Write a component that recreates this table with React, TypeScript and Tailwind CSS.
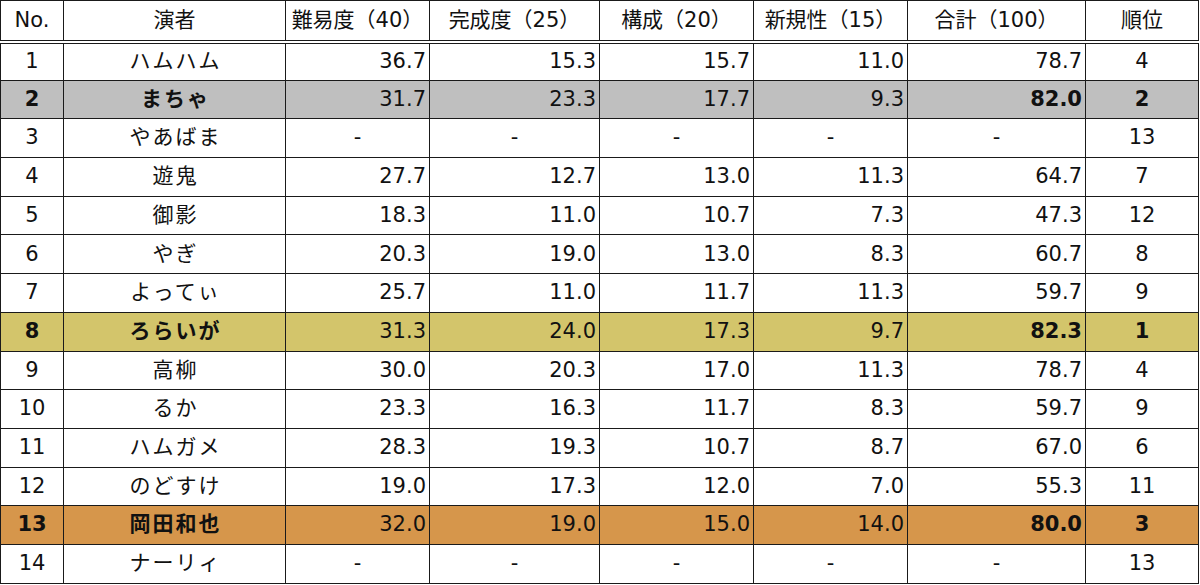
type Row = {
  no: number;
  name: string;
  scores: string[];
  total: string;
  rank: number;
  hl?: 'gray' | 'gold' | 'orange';
};

const rows: Row[] = [
  { no: 1, name: 'ハムハム', scores: ['36.7', '15.3', '15.7', '11.0'], total: '78.7', rank: 4 },
  { no: 2, name: 'まちゃ', scores: ['31.7', '23.3', '17.7', '9.3'], total: '82.0', rank: 2, hl: 'gray' },
  { no: 3, name: 'やあばま', scores: ['-', '-', '-', '-'], total: '-', rank: 13 },
  { no: 4, name: '遊鬼', scores: ['27.7', '12.7', '13.0', '11.3'], total: '64.7', rank: 7 },
  { no: 5, name: '御影', scores: ['18.3', '11.0', '10.7', '7.3'], total: '47.3', rank: 12 },
  { no: 6, name: 'やぎ', scores: ['20.3', '19.0', '13.0', '8.3'], total: '60.7', rank: 8 },
  { no: 7, name: 'よってぃ', scores: ['25.7', '11.0', '11.7', '11.3'], total: '59.7', rank: 9 },
  { no: 8, name: 'ろらいが', scores: ['31.3', '24.0', '17.3', '9.7'], total: '82.3', rank: 1, hl: 'gold' },
  { no: 9, name: '高柳', scores: ['30.0', '20.3', '17.0', '11.3'], total: '78.7', rank: 4 },
  { no: 10, name: 'るか', scores: ['23.3', '16.3', '11.7', '8.3'], total: '59.7', rank: 9 },
  { no: 11, name: 'ハムガメ', scores: ['28.3', '19.3', '10.7', '8.7'], total: '67.0', rank: 6 },
  { no: 12, name: 'のどすけ', scores: ['19.0', '17.3', '12.0', '7.0'], total: '55.3', rank: 11 },
  { no: 13, name: '岡田和也', scores: ['32.0', '19.0', '15.0', '14.0'], total: '80.0', rank: 3, hl: 'orange' },
  { no: 14, name: 'ナーリィ', scores: ['-', '-', '-', '-'], total: '-', rank: 13 },
];

const headers = ['No.', '演者', '難易度（40）', '完成度（25）', '構成（20）', '新規性（15）', '合計（100）', '順位'];
const widths = ['w-[63px]', 'w-[222px]', 'w-[144px]', 'w-[170px]', 'w-[154px]', 'w-[154px]', 'w-[178px]', 'w-[113px]'];

const bgFor = (hl?: Row['hl']) =>
  hl === 'gray' ? 'bg-[#bfbfbf]' : hl === 'gold' ? 'bg-[#d3c56b]' : hl === 'orange' ? 'bg-[#d6964b]' : 'bg-white';

export default function App() {
  const cell = 'border border-[#1a1a1a] h-[38.7px] p-0';
  return (
    <div
      className="w-[1200px] h-[585px] bg-white text-[#111] text-[21px] overflow-hidden"
      style={{ fontFamily: '"DejaVu Sans", "Noto Sans CJK JP", sans-serif' }}
    >
      <table className="border-collapse table-fixed w-[1198px]">
        <colgroup>
          {widths.map((w, i) => (
            <col key={i} className={w} />
          ))}
        </colgroup>
        <thead>
          <tr>
            {headers.map((h) => (
              <th
                key={h}
                className="border border-[#1a1a1a] border-b-[4px] border-b-[#1a1a1a] [border-bottom-style:double] h-[41px] font-normal text-center whitespace-nowrap p-0"
              >
                {h}
              </th>
            ))}
          </tr>
        </thead>
        <tbody>
          {rows.map((r) => {
            const bold = r.hl ? 'font-bold' : '';
            return (
              <tr key={r.no} className={bgFor(r.hl)}>
                <td className={`${cell} text-center ${bold}`}>{r.no}</td>
                <td className={`${cell} text-center tracking-[2px] pl-[2px] ${bold}`}>{r.name}</td>
                {r.scores.map((s, i) => (
                  <td key={i} className={`${cell} ${s === '-' ? 'text-center' : 'text-right pr-[3px]'}`}>
                    {s}
                  </td>
                ))}
                <td className={`${cell} ${r.total === '-' ? 'text-center' : 'text-right pr-[3px]'} ${bold}`}>{r.total}</td>
                <td className={`${cell} text-center ${bold}`}>{r.rank}</td>
              </tr>
            );
          })}
        </tbody>
      </table>
    </div>
  );
}
